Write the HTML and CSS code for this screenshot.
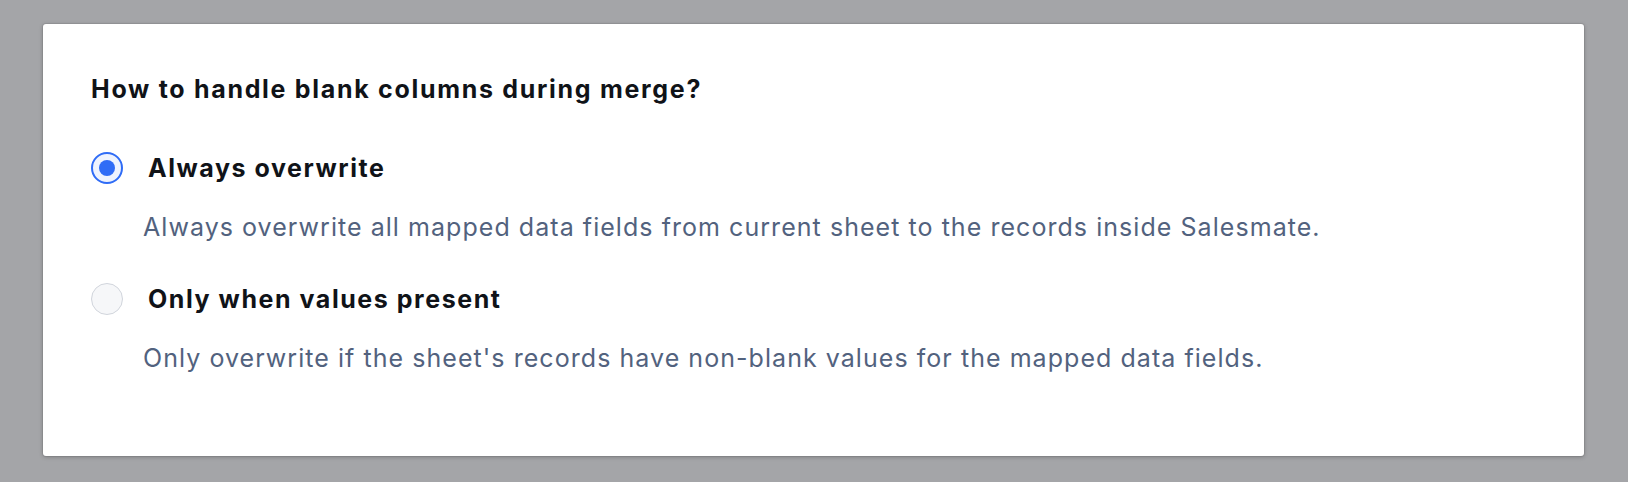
FILE: index.html
```html
<!DOCTYPE html>
<html>
<head>
<meta charset="utf-8">
<link rel="stylesheet" href="styles.css">
</head>
<body>
<div class="page">
  <div class="card">
    <h2 class="title">How to handle blank columns during merge?</h2>
    <div class="options">
      <div class="option">
        <div class="option-head">
          <span class="radio checked"></span>
          <span class="label">Always overwrite</span>
        </div>
        <p class="desc">Always overwrite all mapped data fields from current sheet to the records inside Salesmate.</p>
      </div>
      <div class="option">
        <div class="option-head">
          <span class="radio"></span>
          <span class="label">Only when values present</span>
        </div>
        <p class="desc">Only overwrite if the sheet's records have non-blank values for the mapped data fields.</p>
      </div>
    </div>
  </div>
</div>
</body>
</html>
```
FILE: styles.css
```css
html, body {
  margin: 0;
  padding: 0;
}
body {
  background: #a4a5a8;
  font-family: Inter, "Noto Sans", sans-serif;
}
.page {
  padding: 24px 44px 26px 43px;
}
.card {
  background: #ffffff;
  border-radius: 3px;
  box-shadow: 0 1px 4px rgba(0, 0, 0, 0.25), 0 0 0 1px rgba(0, 0, 0, 0.06);
  height: 432px;
  box-sizing: border-box;
  padding: 49px 48px 0 48px;
}
.title {
  margin: 0;
  font-size: 25px;
  font-weight: 700;
  letter-spacing: 1.7px;
  color: #101318;
  line-height: 32px;
}
.options {
  display: flex;
  flex-direction: column;
  gap: 40px;
  margin-top: 47px;
}
.option-head {
  display: flex;
  align-items: center;
  gap: 25px;
}
.radio {
  width: 32px;
  height: 32px;
  box-sizing: border-box;
  border-radius: 50%;
  border: 1.5px solid #d1d5dc;
  background: #f6f7f9;
  display: flex;
  align-items: center;
  justify-content: center;
  flex: none;
}
.radio.checked {
  border: 2px solid #2f6cf6;
  background: #eef3fe;
}
.radio.checked::after {
  content: "";
  width: 16px;
  height: 16px;
  border-radius: 50%;
  background: #2f6cf6;
}
.label {
  font-size: 25px;
  font-weight: 700;
  letter-spacing: 1.55px;
  color: #101318;
  line-height: 32px;
}
.desc {
  margin: 27px 0 0 52px;
  font-size: 25px;
  letter-spacing: 1.05px;
  color: #52627e;
  line-height: 32px;
}
```
